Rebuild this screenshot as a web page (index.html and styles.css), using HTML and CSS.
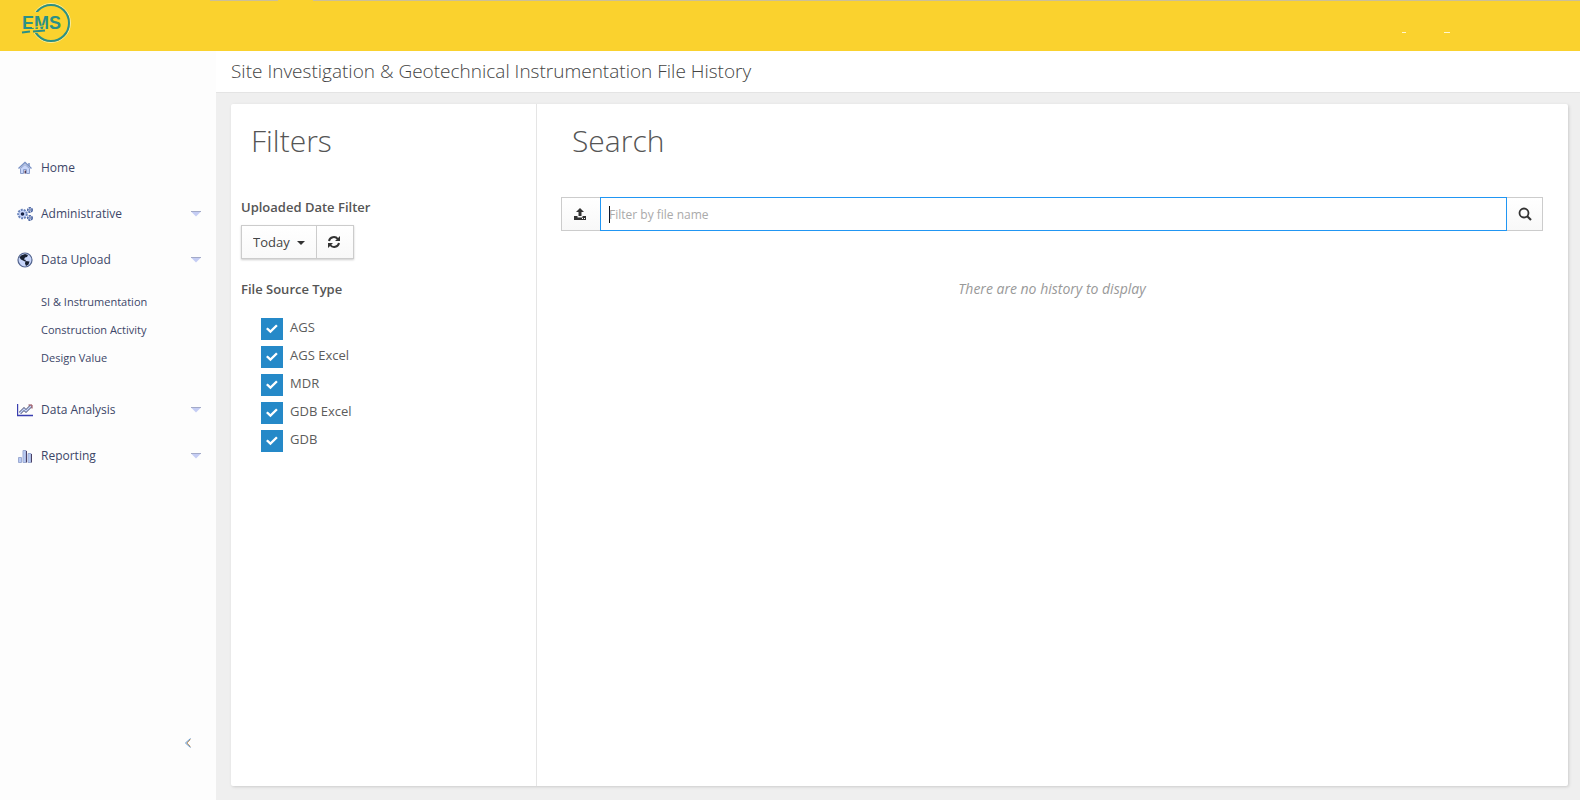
FILE: index.html
```html
<!DOCTYPE html>
<html lang="en">
<head>
<meta charset="utf-8">
<title>Site Investigation &amp; Geotechnical Instrumentation File History</title>
<link rel="stylesheet" href="styles.css">
</head>
<body>
<header class="topbar">
  <svg class="logo" viewBox="0 0 54 44" role="img" aria-label="EMS">
    <circle cx="31" cy="21" r="19.5" fill="none" stroke="#f7eea0" stroke-width="1"/>
    <circle cx="31" cy="21" r="18" fill="none" stroke="#2a9087" stroke-width="2"/>
    <path d="M9 10h9v21H9z" fill="#fad22e"/>
    <text x="2" y="27" class="logo-text">EMS</text>
    <path d="M2 28.500l8-1M12 25.500l14-2" stroke="#fad22e" stroke-width="1"/>
    <path d="M2 30.500l8-1M13 29.500l12-1" stroke="#2a9087" stroke-width="2"/>
  </svg>
  <div class="marks"><span class="mark mark-short"></span><span class="mark"></span></div>
</header>
<div class="layout">
  <aside class="sidebar">
    <nav class="nav">
      <a class="nav-item" href="#">
        <svg class="nav-icon" viewBox="0 0 16 16"><path d="M1.500 8.500L8 2.500l6.500 6" fill="none" stroke="#7890c4" stroke-width="1.400"/><path d="M3.500 8.500L8 4.500l4.500 4v5h-3v-4h-3v4h-3z" fill="#c8d6fa" stroke="#8c9fcc"/><path d="M12 3v3" stroke="#7890c4" stroke-width="1.500"/><path d="M7.500 10.500h1.500v3H7.500z" fill="#543a58"/></svg>
        <span>Home</span>
      </a>
      <a class="nav-item" href="#">
        <svg class="nav-icon" viewBox="0 0 16 16"><circle cx="5.500" cy="8" r="4.300" fill="#c8d6fa" stroke="#6a84ba" stroke-width="2" stroke-dasharray="2 1"/><circle cx="5.500" cy="8" r="1.800" fill="#182448"/><circle cx="13" cy="4" r="2.200" fill="#dce6ff" stroke="#405c9c" stroke-width="1.500" stroke-dasharray="2 .7"/><circle cx="13" cy="12" r="2.200" fill="#dce6ff" stroke="#405c9c" stroke-width="1.500" stroke-dasharray="2 .7"/><circle cx="13" cy="4" r=".7" fill="#182448"/><circle cx="13" cy="12" r=".7" fill="#182448"/></svg>
        <span>Administrative</span>
        <svg class="arrow" viewBox="0 0 12 6"><path d="M1 .5h10L6 5.500z" fill="#c5cdf4"/><path d="M1 .5h10" stroke="#a3aac8"/></svg>
      </a>
      <a class="nav-item" href="#">
        <svg class="nav-icon" viewBox="0 0 16 16"><circle cx="8" cy="8" r="7" fill="#c8d6fa" stroke="#53648e" stroke-width="1.200"/><path d="M4 3.500l4-1.500 3 1-1 2-2 .5-1 2 2 .5-1 1.500-2-1-2-1-1.500-2zM8.500 9l4 .5-1 3-2.500 1.500-1-2.500z" fill="#182030"/></svg>
        <span>Data Upload</span>
        <svg class="arrow" viewBox="0 0 12 6"><path d="M1 .5h10L6 5.500z" fill="#c5cdf4"/><path d="M1 .5h10" stroke="#a3aac8"/></svg>
      </a>
      <div class="subnav">
        <a href="#">SI &amp; Instrumentation</a>
        <a href="#">Construction Activity</a>
        <a href="#">Design Value</a>
      </div>
      <a class="nav-item" href="#">
        <svg class="nav-icon" viewBox="0 0 16 16"><path d="M.5 2v11.500H16" fill="none" stroke="#3a3fb0" stroke-width="1.400"/><path d="M3 11l4-4 2 2 5-5" fill="none" stroke="#454b70" stroke-width="3"/><path d="M3 11l4-4 2 2 5-5" fill="none" stroke="#c8d6fa" stroke-width="1.500"/><path d="M11.500 3H15v3.500" fill="none" stroke="#8c3a48"/></svg>
        <span>Data Analysis</span>
        <svg class="arrow" viewBox="0 0 12 6"><path d="M1 .5h10L6 5.500z" fill="#c5cdf4"/><path d="M1 .5h10" stroke="#a3aac8"/></svg>
      </a>
      <a class="nav-item" href="#">
        <svg class="nav-icon" viewBox="0 0 16 16"><path d="M1.500 9.500h3v5h-3zM6 2.500h3v12H6zM11 5.500h3v9h-3z" fill="#b9cbf4" stroke="#9dabd2"/><path d="M9.500 3v11.500M14.500 6v8.500" stroke="#4a4064"/></svg>
        <span>Reporting</span>
        <svg class="arrow" viewBox="0 0 12 6"><path d="M1 .5h10L6 5.500z" fill="#c5cdf4"/><path d="M1 .5h10" stroke="#a3aac8"/></svg>
      </a>
    </nav>
    <button class="collapse" type="button" aria-label="Collapse menu">
      <svg width="8" height="10" viewBox="0 0 8 10"><path d="M6.500 .5L1.500 5l5 4.500" fill="none" stroke="#5d8fc4"/><path d="M6.500 1.500L3 5l3.500 3.500" fill="none" stroke="#c9a070"/></svg>
    </button>
  </aside>
  <main class="main">
    <h1 class="page-title">Site Investigation &amp; Geotechnical Instrumentation File History</h1>
    <div class="content">
      <section class="filters">
        <h2>Filters</h2>
        <label class="group-label" for="date">Uploaded Date Filter</label>
        <div class="date-group">
          <select id="date" class="date-select"><option>Today</option></select>
          <button class="btn refresh" type="button" aria-label="Refresh">
            <svg width="14" height="14" viewBox="0 0 14 14"><path d="M2 6a5 5 0 0 1 8.800-2M12 8a5 5 0 0 1-8.800 2" fill="none" stroke="#333" stroke-width="2"/><path d="M13 1v5H8zM1 13V8h5z" fill="#333"/></svg>
          </button>
        </div>
        <fieldset class="sources">
          <legend class="group-label">File Source Type</legend>
          <label class="check"><input type="checkbox" checked><span>AGS</span></label>
          <label class="check"><input type="checkbox" checked><span>AGS Excel</span></label>
          <label class="check"><input type="checkbox" checked><span>MDR</span></label>
          <label class="check"><input type="checkbox" checked><span>GDB Excel</span></label>
          <label class="check"><input type="checkbox" checked><span>GDB</span></label>
        </fieldset>
      </section>
      <section class="search">
        <h2>Search</h2>
        <div class="search-row">
          <button class="btn upload" type="button" aria-label="Upload">
            <svg width="14" height="14" viewBox="0 0 14 14"><path d="M7 1l4 4H8.500v4h-3V5H3z" fill="#333"/><path d="M1 9h3.500v1.500h5V9H13v4H1z" fill="#333"/><path d="M9 11.500h1M11 11.500h1" stroke="#fff"/></svg>
          </button>
          <input class="search-input" type="text" placeholder="Filter by file name" aria-label="Filter by file name">
          <button class="btn find" type="button" aria-label="Search">
            <svg width="14" height="14" viewBox="0 0 14 14"><circle cx="6" cy="6" r="4.500" fill="none" stroke="#333" stroke-width="1.800"/><path d="M9 9l4 4" stroke="#333" stroke-width="2.200"/></svg>
          </button>
        </div>
        <p class="empty">There are no history to display</p>
      </section>
    </div>
  </main>
</div>
</body>
</html>
```
FILE: styles.css
```css
* { box-sizing: border-box; }
body {
  margin: 0;
  min-height: 100vh;
  display: flex;
  flex-direction: column;
  font: 13px/20px "Open Sans", "Noto Sans", sans-serif;
  color: #5c5c5c;
  background: #efefef;
}
.topbar {
  display: flex;
  justify-content: space-between;
  height: 51px;
  padding: 2px 130px 0 20px;
  background: linear-gradient(to right, transparent 210px, #cbbf98 210px, #cbbf98 278px, transparent 278px, transparent 313px, #cbbf98 313px) top / 100% 1px no-repeat #fad22e;
}
.logo { width: 54px; height: 44px; }
.logo-text { font: bold 18px "Liberation Sans Narrow", "Liberation Sans", sans-serif; fill: #2a9087; }
.marks { display: flex; gap: 38px; padding-top: 30px; }
.mark { width: 6px; height: 1px; background: #fff6cf; }
.mark-short { width: 4px; }
.layout { flex: 1; display: flex; }
.sidebar {
  flex: 0 0 216px;
  display: flex;
  flex-direction: column;
  justify-content: space-between;
  padding: 94px 14px 52px 17px;
  background: #fdfdfd;
}
.nav { display: flex; flex-direction: column; }
.nav-item {
  display: flex;
  align-items: center;
  gap: 8px;
  height: 46px;
  font-size: 12px;
  color: #3c4668;
  text-decoration: none;
}
.nav-icon { width: 16px; height: 16px; }
.arrow { width: 12px; height: 6px; margin-left: auto; }
.subnav {
  display: flex;
  flex-direction: column;
  gap: 8px;
  padding: 9px 0 19px 24px;
}
.subnav a { font-size: 11px; color: #3c4668; text-decoration: none; }
.collapse {
  align-self: flex-end;
  display: flex;
  margin-right: 10px;
  padding: 0;
  border: 0;
  background: none;
}
.main { flex: 1; min-width: 0; display: flex; flex-direction: column; }
.page-title {
  margin: 0;
  padding: 0 15px;
  font-size: 19px;
  line-height: 41px;
  font-weight: 300;
  color: #444;
  background: #fff;
  border-bottom: 1px solid #e4e4e4;
}
.content {
  flex: 1;
  display: flex;
  margin: 11px 12px 14px 15px;
  background: #fff;
  box-shadow: 1px 1px 3px #ccc;
  border-radius: 2px;
}
h2 { margin: 0; font-size: 30px; line-height: 40px; font-weight: 300; color: #555; }
.filters { flex: 0 0 306px; padding: 17px 10px; border-right: 1px solid #e5e5e5; }
.filters h2 { padding-left: 10px; margin-bottom: 36px; }
.group-label { display: block; padding: 0; font-weight: 600; line-height: 20px; color: #555; }
.date-group { display: flex; width: max-content; margin: 8px 0 20px; box-shadow: 0 1px 2px #ccc; }
.date-select {
  appearance: none;
  width: 76px;
  height: 34px;
  padding: 0 11px;
  font: inherit;
  color: #444;
  border: 1px solid #ccc;
  border-radius: 0;
  background: url("data:image/svg+xml,%3Csvg xmlns='http://www.w3.org/2000/svg' width='8' height='6'%3E%3Cpath d='M0 2h8L4 6z' fill='%23333'/%3E%3C/svg%3E") right 11px center no-repeat, linear-gradient(#fff, #f9f9f9);
}
.btn {
  display: flex;
  align-items: center;
  justify-content: center;
  height: 34px;
  padding: 0;
  border: 1px solid #ccc;
  background: linear-gradient(#fff, #f8f8f8);
}
.refresh { width: 37px; padding-right: 3px; border-left: 0; }
.sources { margin: 0; padding: 0; border: 0; }
.sources legend { margin-bottom: 19px; }
.check { display: flex; gap: 7px; height: 22px; margin: 0 0 6px 20px; line-height: 18px; }
.check input {
  appearance: none;
  display: grid;
  place-items: center;
  width: 22px;
  height: 22px;
  margin: 0;
  background: #2589c8;
}
.check input:checked::before {
  content: "";
  width: 12px;
  height: 10px;
  background: #fff;
  clip-path: polygon(0 50%, 14% 34%, 37% 60%, 84% 6%, 98% 20%, 37% 92%);
}
.search { flex: 1; min-width: 0; padding: 17px 25px 17px 24px; }
.search h2 { padding-left: 11px; margin-bottom: 36px; }
.search-row { display: flex; }
.upload { width: 39px; padding-right: 3px; border-right: 0; }
.find { width: 36px; border-left: 0; }
.search-input {
  flex: 1;
  min-width: 0;
  height: 34px;
  padding: 0 8px;
  font: 12px "Open Sans", "Noto Sans", sans-serif;
  border: 1px solid #2196f3;
  outline: 0;
  background: linear-gradient(#111, #111) 8px center / 1px 17px no-repeat #fff;
}
.search-input::placeholder { color: #aaa; opacity: 1; }
.empty { margin: 48px 0 0; font-size: 14px; font-style: italic; text-align: center; color: #999; }
```
